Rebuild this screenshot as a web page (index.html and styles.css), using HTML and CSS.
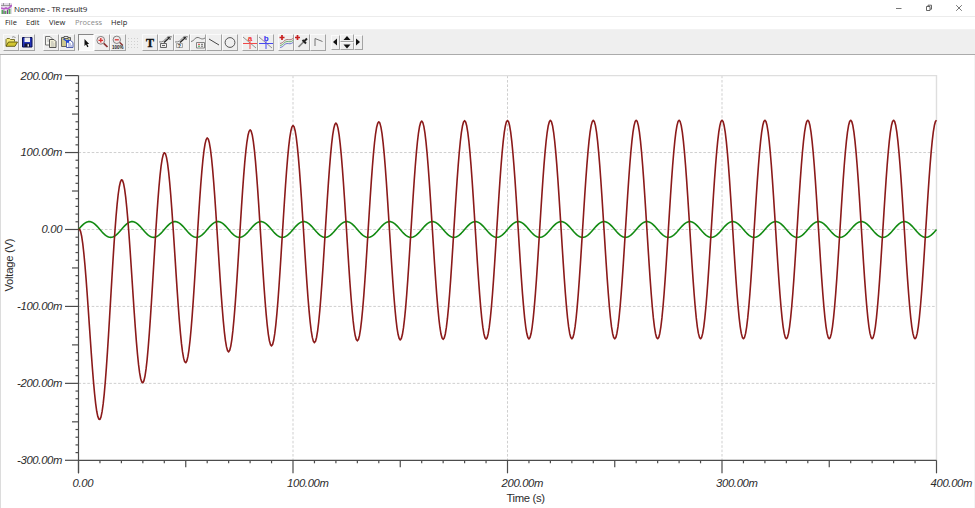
FILE: index.html
```html
<!DOCTYPE html>
<html lang="en">
<head>
    <meta charset="utf-8">
    <meta name="viewport" content="width=device-width, initial-scale=1">
    <title>Noname - TR result9</title>
    <link rel="stylesheet" href="styles.css">
</head>
<body>
    <header class="titlebar">
        <svg class="app-icon" width="11" height="11" viewBox="0 0 11 11">
            <rect width="11" height="11" fill="#e4dce8"/>
            <path d="M0 2.500h11M2.500 0v3M8.500 0v3" stroke="#888" stroke-width=".8"/>
            <path d="M0 5l3 1 2-1 2 1 4-4" fill="none" stroke="#b85cc8" stroke-width="1.600"/>
            <path d="M1.500 11V7M4.500 11V8M8.500 11V6" fill="none" stroke="#58ac5c" stroke-width="1.800"/>
            <path d="M3 11V7.500M6.500 11V7" stroke="#7a3c8a"/>
        </svg>
        <span class="title">Noname - TR result9</span>
        <div class="window-buttons">
            <svg width="8" height="8" viewBox="0 0 8 8"><path d="M1 4.500h5.500" stroke="#777"/></svg>
            <svg width="8" height="8" viewBox="0 0 8 8"><path d="M1.500 2.500h3.500v4H1.500zM3 2.500V1.200h3.500v4H5" fill="none" stroke="#555" stroke-width=".9"/></svg>
            <svg width="8" height="8" viewBox="0 0 8 8"><path d="M1.200 1.200l5.600 5.600M6.800 1.200L1.200 6.800" stroke="#666" stroke-width=".9"/></svg>
        </div>
    </header>

    <nav class="menu">
        <span class="m-file">File</span>
        <span class="m-edit">Edit</span>
        <span class="m-view">View</span>
        <span class="m-process">Process</span>
        <span class="m-help">Help</span>
    </nav>

    <div class="toolbar">
        <div class="group">
            <button class="tool" title="Open"><svg viewBox="0 0 16 16"><path d="M3 12V5.500l1-1h2.500l1 1h4v2" fill="#f3e978" stroke="#6c651c" stroke-width=".9"/><path d="M3 12.300l2.500-4.300h9L12 12.300z" fill="#d2c632" stroke="#5c560f" stroke-width=".9"/><path d="M9 3.500c1-1.200 2.500-1 3.500.5" fill="none" stroke="#777" stroke-width=".8"/></svg></button>
            <button class="tool" title="Save"><svg viewBox="0 0 16 16"><path d="M3.500 3.500h9.500v9.500h-9.500z" fill="#2233b8" stroke="#0a0f50"/><path d="M5.500 3.500h5.500v4.500h-5.500z" fill="#eee"/><path d="M5.500 9.500h5.500V13h-5.500z" fill="#151530"/><path d="M8.500 10.300h1.500V12.500H8.500z" fill="#eee"/></svg></button>
        </div>
        <div class="group">
            <button class="tool" title="Copy"><svg viewBox="0 0 16 16"><path d="M2.500 2.500h4.500l2 2v6.500h-6.500z" fill="#f4f4f0" stroke="#666" stroke-width=".9"/><path d="M6.500 5.500h4.500l2 2v6h-6.500z" fill="#f2f0d8" stroke="#444" stroke-width=".9"/><path d="M8 8h2.500M8 10h3.500M8 12h3.500M4 5h2M4 7h2" stroke="#999" stroke-width=".7"/></svg></button>
            <button class="tool" title="Paste"><svg viewBox="0 0 16 16"><path d="M2.500 3.500h9v9h-9z" fill="#cdc88c" stroke="#555" stroke-width=".9"/><path d="M5 2.500h4v2H5z" fill="#eee" stroke="#444" stroke-width=".8"/><path d="M7.500 6.500h4l2.500 2v5H7.500z" fill="#fff" stroke="#3c4ea8" stroke-width=".9"/><path d="M4.500 5l5 3V5.500M9.500 8H7" stroke="#2048d4" fill="none" stroke-width="1.300"/><path d="M9 10h3M9 12h4" stroke="#6070c0" stroke-width=".8"/></svg></button>
        </div>
        <div class="group">
            <button class="tool pressed" title="Select"><svg viewBox="0 0 16 16"><path d="M6.500 5v7l1.500-1.500 1.300 2.700 1.200-.6-1.300-2.600h2z" fill="#111"/></svg></button>
            <button class="tool" title="Zoom in"><svg viewBox="0 0 16 16"><circle cx="6.800" cy="6.300" r="3.900" fill="#f8e6e6" stroke="#777" stroke-width=".9"/><path d="M4.500 6.300h4.600M6.800 4v4.600" stroke="#d83030" stroke-width="1.300"/><path d="M9.800 9.300l3.700 3.700" stroke="#8a3030" stroke-width="1.700"/></svg></button>
            <button class="tool" title="Zoom out"><svg viewBox="0 0 16 16"><circle cx="6.800" cy="5.800" r="3.700" fill="#f0eaea" stroke="#777" stroke-width=".9"/><path d="M4.800 5.800h4" stroke="#d83030" stroke-width="1.300"/><path d="M9.800 8.500l3 3" stroke="#833" stroke-width="1.500"/><text x="2" y="14.500" class="percent">100%</text></svg></button>
            <button class="tool flat" title="Grid"><svg viewBox="0 0 16 16"><path d="M2 4.500h12M2 7.500h12M2 10.500h12M2 13.500h12" stroke="#d0d0d0" stroke-dasharray="1 2"/></svg></button>
            <button class="tool" title="Text"><svg viewBox="0 0 16 16"><text x="8" y="12.500" class="letter">T</text></svg></button>
            <button class="tool" title="Marker"><svg viewBox="0 0 16 16"><path d="M1 8c4 0 5-1 7-3.500s3-2.500 6-1.500" fill="none" stroke="#777" stroke-width=".9"/><path d="M6 8.500l5-4.500" stroke="#222" stroke-width="1.300"/><path d="M9.500 3.500h2.500V6" fill="none" stroke="#222" stroke-width=".9"/><path d="M2.500 9.500h6v4h-6zM4 11.500h3" fill="#eee" stroke="#555" stroke-width=".9"/></svg></button>
            <button class="tool" title="Label"><svg viewBox="0 0 16 16"><path d="M1 8c4 0 5-1 7-3.500s3-2.500 6-1.500" fill="none" stroke="#777" stroke-width=".9"/><path d="M6 8.500l5-4.500" stroke="#222" stroke-width="1.300"/><path d="M9.500 3.500h2.500V6" fill="none" stroke="#222" stroke-width=".9"/><path d="M2.500 9.500h6v4h-6z" fill="#eee" stroke="#888" stroke-width=".7"/><text x="3.700" y="13.600" class="mark">?</text></svg></button>
            <button class="tool" title="Legend"><svg viewBox="0 0 16 16"><path d="M1 7.500c3 0 3-3.500 6-4s4 3 8 .5" fill="none" stroke="#666" stroke-width=".9"/><path d="M6.500 8.500h8v5.500h-8z" fill="#f4f4f4" stroke="#777" stroke-width=".9"/><path d="M8 10.300h2" stroke="#d84040"/><path d="M8 12.200h2" stroke="#30a04c"/><path d="M11 10.300h2M11 12.200h2" stroke="#666"/></svg></button>
            <button class="tool" title="Line"><svg viewBox="0 0 16 16"><path d="M3 5l10 6" stroke="#333" stroke-width=".9"/></svg></button>
            <button class="tool" title="Circle"><svg viewBox="0 0 16 16"><circle cx="8" cy="8.500" r="4.900" fill="none" stroke="#444" stroke-width=".9"/></svg></button>
        </div>
        <div class="group">
            <button class="tool" title="Cursor a"><svg viewBox="0 0 16 16"><path d="M1 3l13 11" stroke="#777" stroke-width=".8"/><path d="M1 9.500h14M8 7v8" stroke="#f04848"/><text x="5.800" y="6.500" class="cursor-a">a</text></svg></button>
            <button class="tool" title="Cursor b"><svg viewBox="0 0 16 16"><path d="M1 3l13 11" stroke="#777" stroke-width=".8"/><path d="M1 9.500h14M8 7v8" stroke="#4848f0"/><text x="5.800" y="7" class="cursor-b">b</text></svg></button>
        </div>
        <div class="group">
            <button class="tool" title="Add curves"><svg viewBox="0 0 16 16"><path d="M2 9.500c3.500 0 4-4 7-4s3 1 6-1" fill="none" stroke="#a06c6c" stroke-width=".9"/><path d="M2 11.500c3.500 0 4-4 7-4s3 1 6-1" fill="none" stroke="#5ea866" stroke-width=".9"/><path d="M2 13.500c3.500 0 4-4 7-4s3 1 6-1" fill="none" stroke="#626cc8" stroke-width=".9"/><path d="M1.500 3.500h5M4 1v5" stroke="#c82020" stroke-width="1.700"/></svg></button>
            <button class="tool" title="Pick"><svg viewBox="0 0 16 16"><path d="M4.500 13l5-5" stroke="#888" stroke-width="1.700"/><path d="M8.500 6l3.500 3.500M10 7.500l3-3" stroke="#222" stroke-width="2"/><path d="M1 3.500h5M3.500 1v5" stroke="#c82020" stroke-width="1.700"/></svg></button>
            <button class="tool" title="Angle"><svg viewBox="0 0 16 16"><path d="M5 12V4.500L12.500 7.500" fill="none" stroke="#666" stroke-width=".9"/></svg></button>
        </div>
        <div class="group spin">
            <button class="tool narrow" title="Previous"><svg viewBox="0 0 8 16"><path d="M6 4.500v7L2 8z" fill="#111"/></svg></button>
            <div class="updown">
                <button class="tool half" title="Up"><svg viewBox="0 0 14 8"><path d="M3.500 6h7L7 2z" fill="#111"/></svg></button>
                <button class="tool half" title="Down"><svg viewBox="0 0 14 8"><path d="M3.500 2.500h7L7 6.500z" fill="#111"/></svg></button>
            </div>
            <button class="tool narrow" title="Next"><svg viewBox="0 0 8 16"><path d="M2 4.500v7L6 8z" fill="#111"/></svg></button>
        </div>
    </div>

    <main class="diagram">
        <svg id="plot" width="973" height="453" viewBox="1 55 973 453"></svg>
    </main>

    <script src="plot.js"></script>
</body>
</html>
```
FILE: styles.css
```css
body {
    margin: 0;
    height: 100vh;
    display: flex;
    flex-direction: column;
    overflow: hidden;
    background-color: #fff;
    color: #222;
    font-family: 'Open Sans', 'Noto Sans', sans-serif;
}

.titlebar {
    display: flex;
    align-items: center;
    height: 16px;
    border-bottom: 1px solid #ececec;
}

.app-icon {
    margin-left: 1px;
}

.title {
    margin-left: 2px;
    font-size: 8px;
    letter-spacing: -0.16px;
    line-height: 17px;
    white-space: nowrap;
}

.window-buttons {
    display: flex;
    gap: 22px;
    margin-left: auto;
    margin-right: 12px;
}

.menu {
    display: flex;
    height: 12px;
    padding-left: 5px;
    font-size: 7.5px;
    line-height: 11px;
    border-bottom: 1px solid #f2f2f2;
}

.m-file {
    width: 21px;
}

.m-edit {
    width: 23px;
}

.m-view {
    width: 26px;
}

.m-process {
    width: 36px;
    color: #8a8a8a;
}

/* toolbar */
.toolbar {
    display: flex;
    align-items: center;
    gap: 4px;
    height: 24px;
    padding-left: 3px;
    background-color: #efefef;
    border-bottom: 1px solid #ababab;
}

.group {
    display: flex;
}

.group:nth-child(2) {
    margin-left: 4px;
}

.group:nth-child(3) {
    margin-left: -1px;
}

.tool {
    box-sizing: border-box;
    width: 16px;
    height: 17px;
    padding: 0;
    border: 1px solid;
    border-color: #fafafa #a4a4a4 #a4a4a4 #fafafa;
    background-color: #efefef;
    overflow: hidden;
}

.tool svg {
    display: block;
    width: 16px;
    height: 16px;
    margin: -1px;
}

.pressed {
    border-color: #888 #fff #fff #888;
    background-color: #f8f8f8;
}

.flat {
    border-color: #efefef;
}

.spin {
    margin-left: 1px;
    align-items: center;
}

.narrow {
    width: 9px;
    height: 15px;
}

.narrow svg {
    width: 8px;
    margin-top: -2px;
}

.updown {
    display: flex;
    flex-direction: column;
}

.half {
    width: 14px;
    height: 8px;
}

.half svg {
    width: 14px;
    height: 8px;
}

.letter {
    font: bold 12px 'Liberation Serif', serif;
    text-anchor: middle;
    fill: #111;
    stroke: #111;
    stroke-width: 0.4;
}

.percent {
    font: bold 4.5px 'Liberation Sans', sans-serif;
    fill: #222;
}

.mark {
    font: bold 5px 'Liberation Sans', sans-serif;
    fill: #222;
}

.cursor-a,
.cursor-b {
    font: bold 8px 'Liberation Sans', sans-serif;
    fill: #f03030;
}

.cursor-b {
    fill: #3030f0;
}

/* diagram */
.diagram {
    flex: 1;
    border-left: 1px solid #dcdcdc;
    border-right: 1px solid #f4f4f4;
}

.diagram svg {
    display: block;
}

.axis {
    stroke: #4c4c4c;
    stroke-width: 1.2;
}

.frame {
    fill: none;
    stroke: #dedede;
    stroke-width: 1.4;
}

.grid {
    stroke: #cfcfcf;
    stroke-dasharray: 2.6 1.8;
}

.curve {
    fill: none;
    stroke-width: 1.6;
    stroke-linejoin: round;
}

.output {
    stroke: #8b1a1a;
}

.input {
    stroke: #128a12;
}

.tick-label,
.axis-title {
    font-family: 'Liberation Sans', Arial, sans-serif;
    font-size: 11.3px;
    fill: #2c2c2c;
}

.tick-label {
    font-style: italic;
}
```
FILE: plot.js
```js
const plot = document.getElementById('plot');

const left = 78.5, right = 936.5;
const top_ = 75.6, bottom = 460.3;

// time in ms, voltage in mV
const px = t => left + t * (right - left) / 400;
const py = v => top_ + (200 - v) * (bottom - top_) / 500;

function add(name, cls, attrs, text) {
    const el = document.createElementNS('http://www.w3.org/2000/svg', name);
    el.setAttribute('class', cls);
    for (const key in attrs) el.setAttribute(key, attrs[key]);
    if (text) el.textContent = text;
    plot.appendChild(el);
}

function line(cls, x1, y1, x2, y2) {
    add('line', cls, { x1, y1, x2, y2 });
}

function label(n) {
    return n === 0 ? '0.00' : n.toFixed(2) + 'm';
}

// grid
for (let v = -200; v <= 100; v += 100) line('grid', left, py(v), right, py(v));
for (let t = 100; t < 400; t += 100) line('grid', px(t), top_, px(t), bottom);
add('path', 'frame', { d: `M${left} ${top_}H${right}V${bottom}` });

// voltage axis
line('axis', left, top_, left, bottom + 13);
for (let v = -300; v <= 200; v += 10) {
    const len = v % 100 === 0 ? 13.5 : v % 50 === 0 ? 6.5 : 3;
    line('axis', left - len, py(v), left, py(v));
    if (v % 100 === 0) {
        const width = v === 0 ? 21 : v < 0 ? 45.5 : 42;
        add('text', 'tick-label', { x: 62.5 - width, y: py(v) + 3.9, textLength: width }, label(v));
    }
}

// time axis
line('axis', left, bottom, right, bottom);
for (let t = 0; t <= 400; t += 10) {
    const len = t % 100 === 0 ? 13 : t % 50 === 0 ? 7 : 3;
    line('axis', px(t), bottom, px(t), bottom + len);
    if (t % 100 === 0) {
        add('text', 'tick-label', { x: px(t) - 6, y: 486.6, textLength: t === 0 ? 21 : 42 }, label(t));
    }
}

add('text', 'axis-title', { x: 506.5, y: 501.9, textLength: 38.5 }, 'Time (s)');
add('text', 'axis-title', { x: 0, y: 0, textLength: 53, transform: 'translate(12.8 291.5) rotate(-90)' }, 'Voltage (V)');

function curve(cls, f) {
    let d = '';
    for (let t = 0; t <= 400; t += 0.5) {
        d += (t ? 'L' : 'M') + px(t).toFixed(2) + ' ' + py(f(t)).toFixed(2);
    }
    add('path', 'curve ' + cls, { d });
}

const w = 2 * Math.PI / 20;
curve('input', t => 10.3 * Math.sin(w * t));
curve('output', t => 142 * (Math.cos(w * t) - Math.exp(-t / 33)));
```
